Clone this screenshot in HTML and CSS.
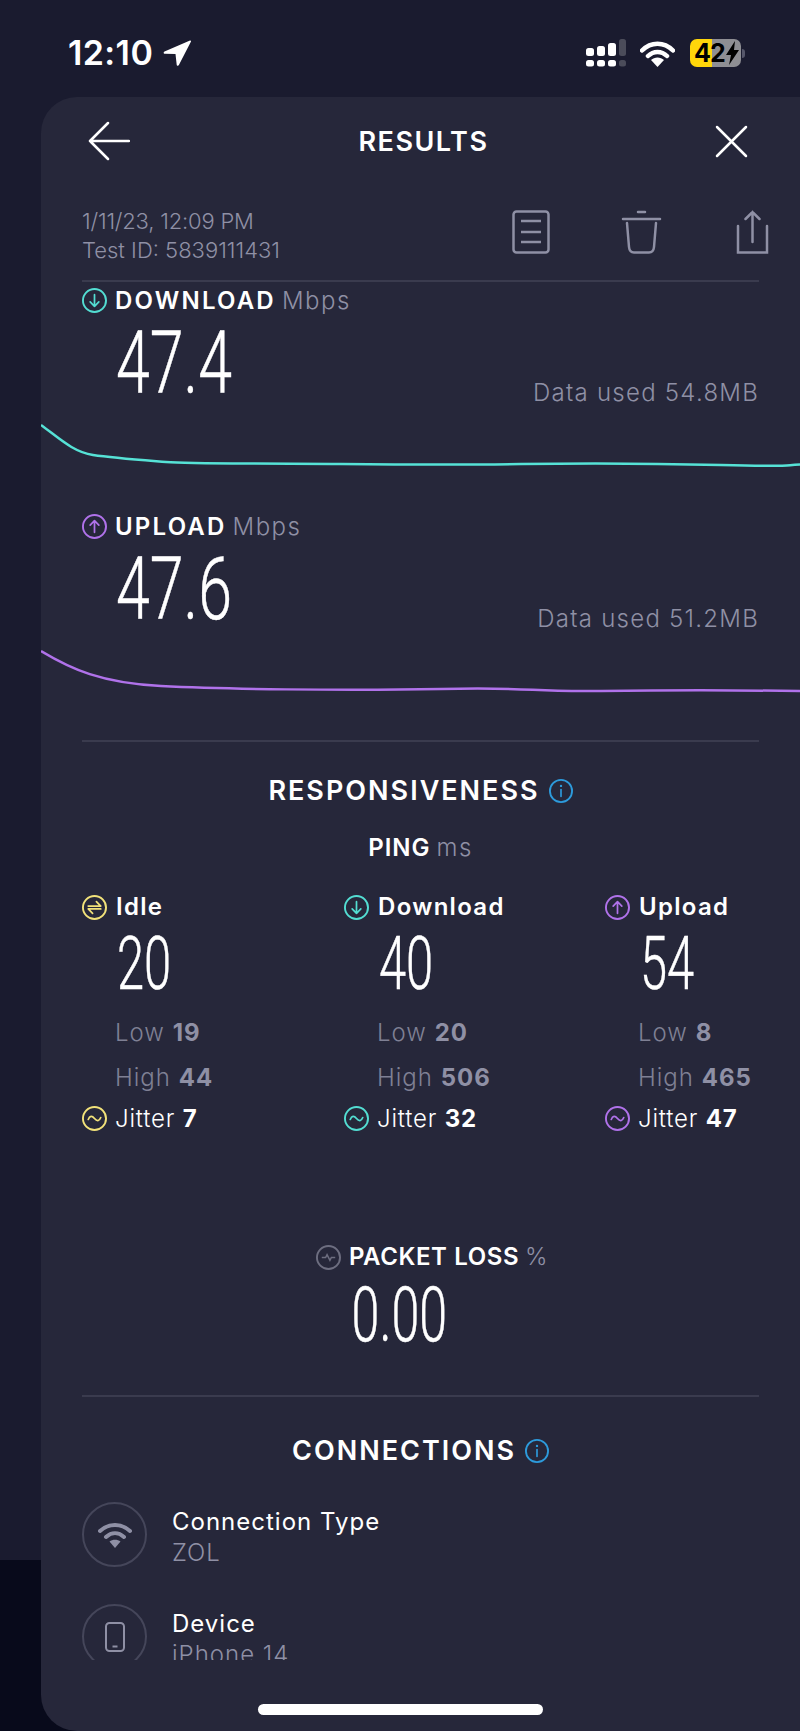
FILE: index.html
```html
<!DOCTYPE html>
<html lang="en">
<head>
    <meta charset="UTF-8">
    <meta name="viewport" content="width=device-width, initial-scale=1.0">
    <title>Results</title>
    <link rel="stylesheet" href="styles.css">
</head>
<body>
    <svg class="defs" width="0" height="0">
        <symbol id="i-down" viewBox="0 0 26 26">
            <circle cx="13" cy="13" r="12" fill="none" stroke="currentColor" stroke-width="2"/>
            <path d="M13 7v12M8.5 14.5L13 19l4.5-4.5" fill="none" stroke="currentColor" stroke-width="1.8" stroke-linecap="round" stroke-linejoin="round"/>
        </symbol>
        <symbol id="i-up" viewBox="0 0 26 26">
            <circle cx="13" cy="13" r="12" fill="none" stroke="currentColor" stroke-width="2"/>
            <path d="M13 19V7M8.5 11.5L13 7l4.5 4.5" fill="none" stroke="currentColor" stroke-width="1.8" stroke-linecap="round" stroke-linejoin="round"/>
        </symbol>
        <symbol id="i-idle" viewBox="0 0 26 26">
            <circle cx="13" cy="13" r="12" fill="none" stroke="currentColor" stroke-width="2"/>
            <path d="M6.5 11.5h13L15 7M19.500 14.500h-13L11 19" fill="none" stroke="currentColor" stroke-width="1.800" stroke-linecap="round" stroke-linejoin="round"/>
        </symbol>
        <symbol id="i-jitter" viewBox="0 0 26 26">
            <circle cx="13" cy="13" r="12" fill="none" stroke="currentColor" stroke-width="2"/>
            <path d="M6.5 14c1.5-4 4-4 6.500-1s5 3 6.500-1" fill="none" stroke="currentColor" stroke-width="1.8" stroke-linecap="round"/>
        </symbol>
        <symbol id="i-info" viewBox="0 0 26 26">
            <circle cx="13" cy="13" r="12" fill="none" stroke="currentColor" stroke-width="2"/>
            <path d="M13 11.500V19" fill="none" stroke="currentColor" stroke-width="1.800" stroke-linecap="round"/>
            <circle cx="13" cy="7.500" r="1.300" fill="currentColor"/>
        </symbol>
    </svg>

    <div class="status">
        <div class="status-time">
            <span>12:10</span>
            <svg width="28" height="26" viewBox="0 0 28 26"><path d="M27 .5L1.500 11.500c-1.300.6-1 2.200.3 2.200l10.700.4 1.200 10.600c.1 1.300 1.700 1.500 2.200.3L28 1.500c.2-.7-.4-1.300-1-1z" fill="#fff"/></svg>
        </div>
        <div class="status-icons">
            <svg width="41" height="28" viewBox="0 0 41 28">
                <rect x="0" y="9" width="8" height="8" rx="2.500" fill="#fff"/>
                <rect x="11" y="7" width="8" height="10" rx="2.500" fill="#fff"/>
                <rect x="22" y="4" width="8" height="13" rx="2.500" fill="#fff"/>
                <rect x="33" y="0" width="7" height="17" rx="2.500" fill="#4b4c5a"/>
                <rect x="0" y="21" width="8" height="6.500" rx="2.500" fill="#fff"/>
                <rect x="11" y="21" width="8" height="6.500" rx="2.500" fill="#fff"/>
                <rect x="22" y="21" width="8" height="6.500" rx="2.500" fill="#fff"/>
                <rect x="33" y="21" width="7" height="6.500" rx="2.500" fill="#4b4c5a"/>
            </svg>
            <svg class="status-wifi" width="35" height="27" viewBox="0 0 35 27">
                <path d="M2 10.500c9-9 22-9 31 0M8 16c5.500-5.500 13.500-5.500 19 0" fill="none" stroke="#fff" stroke-width="4.500" stroke-linecap="round"/>
                <path d="M17.500 27l-6.500-7c3.500-3.500 9.500-3.500 13 0z" fill="#fff"/>
            </svg>
            <div class="battery">
                <span class="battery-level">42</span>
                <svg width="14" height="24" viewBox="0 0 14 24"><path d="M9 0L0 14h5l-2 10 10-15H8z" fill="#000"/></svg>
            </div>
            <div class="battery-tip"></div>
        </div>
    </div>

    <div class="card">
        <div class="topbar">
            <svg width="42" height="40" viewBox="0 0 42 40"><path d="M41 20H2M20 2L2 20l18 18" fill="none" stroke="#fff" stroke-width="2.500" stroke-linecap="round" stroke-linejoin="round"/></svg>
            <h1 class="title">RESULTS</h1>
            <svg class="close" width="33" height="33" viewBox="0 0 33 33"><path d="M2 2l29 29M31 2L2 31" fill="none" stroke="#fff" stroke-width="2.500" stroke-linecap="round"/></svg>
        </div>

        <div class="meta">
            <div class="meta-text">
                <div class="meta-date">1/11/23, 12:09 PM</div>
                <div>Test ID: 5839111431</div>
            </div>
            <div class="meta-actions">
                <svg width="38" height="44" viewBox="0 0 38 44" fill="none" stroke="#8f90a5" stroke-width="2.500"><rect x="1.500" y="1.500" width="35" height="41" rx="3"/><path d="M9 11h20M9 22h20M9 32h20"/></svg>
                <svg width="41" height="44" viewBox="0 0 41 44" fill="none" stroke="#8f90a5" stroke-width="2.500" stroke-linecap="round"><path d="M2 9h37M17 2h7M6 13l2 24c.3 3 2 5.500 5 5.500h15c3 0 4.700-2.500 5-5.500l2-24"/></svg>
                <svg width="33" height="44" viewBox="0 0 33 44" fill="none" stroke="#8f90a5" stroke-width="2.500" stroke-linecap="round"><path d="M2 16v26.500h29V16M16.500 32V2M9.500 9l7-7 7 7"/></svg>
            </div>
        </div>

        <div class="speed">
            <div class="label">
                <svg class="icon-sm teal"><use href="#i-down"/></svg>
                <b>DOWNLOAD</b><span class="unit">Mbps</span>
            </div>
            <div class="speed-row">
                <span class="big-num big-speed">47.4</span>
                <span class="data-used">Data used 54.8MB</span>
            </div>
            <svg class="chart" width="759" height="60" viewBox="0 0 759 60">
                <path d="M0 15C18 28 32 42 52 45S100 50 125 52 200 53 300 54 420 55 480 54 600 53 680 55 740 55 759 54.500" fill="none" stroke="#56e2d6" stroke-width="2.500"/>
            </svg>
        </div>

        <div class="speed">
            <div class="label">
                <svg class="icon-sm purple"><use href="#i-up"/></svg>
                <b>UPLOAD</b><span class="unit">Mbps</span>
            </div>
            <div class="speed-row">
                <span class="big-num big-speed">47.6</span>
                <span class="data-used">Data used 51.2MB</span>
            </div>
            <svg class="chart" width="759" height="60" viewBox="0 0 759 60">
                <path d="M0 15C30 33 60 47 120 50S300 55 400 53 480 56 560 55 680 54 759 55" fill="none" stroke="#b072ea" stroke-width="2.500"/>
            </svg>
        </div>

        <div class="section responsiveness">
            <div class="section-title">
                <b>RESPONSIVENESS</b>
                <svg class="icon-info"><use href="#i-info"/></svg>
            </div>
            <div class="ping-title"><b>PING</b><span class="unit">ms</span></div>
            <div class="ping-grid">
                <div class="ping-col">
                    <div class="label label-case">
                        <svg class="icon-sm yellow"><use href="#i-idle"/></svg>
                        <b>Idle</b>
                    </div>
                    <div class="big-num big-ping">20</div>
                    <div class="stat">Low <b>19</b></div>
                    <div class="stat">High <b>44</b></div>
                    <div class="jitter">
                        <svg class="icon-sm yellow"><use href="#i-jitter"/></svg>
                        <span>Jitter <b>7</b></span>
                    </div>
                </div>
                <div class="ping-col">
                    <div class="label label-case">
                        <svg class="icon-sm teal"><use href="#i-down"/></svg>
                        <b>Download</b>
                    </div>
                    <div class="big-num big-ping">40</div>
                    <div class="stat">Low <b>20</b></div>
                    <div class="stat">High <b>506</b></div>
                    <div class="jitter">
                        <svg class="icon-sm teal"><use href="#i-jitter"/></svg>
                        <span>Jitter <b>32</b></span>
                    </div>
                </div>
                <div class="ping-col">
                    <div class="label label-case">
                        <svg class="icon-sm purple"><use href="#i-up"/></svg>
                        <b>Upload</b>
                    </div>
                    <div class="big-num big-ping">54</div>
                    <div class="stat">Low <b>8</b></div>
                    <div class="stat">High <b>465</b></div>
                    <div class="jitter">
                        <svg class="icon-sm purple"><use href="#i-jitter"/></svg>
                        <span>Jitter <b>47</b></span>
                    </div>
                </div>
            </div>
        </div>

        <div class="packet">
            <div class="label packet-label">
                <svg class="icon-sm" width="25" height="25" viewBox="0 0 26 26"><circle cx="13" cy="13" r="12" fill="none" stroke="#6d6e80" stroke-width="2"/><path d="M6 13h4l1.500-3 3 6 1.500-3h4" fill="none" stroke="#6d6e80" stroke-width="1.500"/></svg>
                <b>PACKET LOSS</b><span class="unit">%</span>
            </div>
            <div class="big-packet-wrap"><span class="big-num big-packet">0.00</span></div>
        </div>

        <div class="section connections">
            <div class="section-title">
                <b>CONNECTIONS</b>
                <svg class="icon-info"><use href="#i-info"/></svg>
            </div>
            <div class="conn-list">
                <div class="conn-row">
                    <div class="conn-icon">
                        <svg width="34" height="26" viewBox="0 0 34 26">
                            <path d="M2 9c9-8 21-8 30 0M8 15c5.500-5 12.500-5 18 0" fill="none" stroke="#8f90a5" stroke-width="4" stroke-linecap="round"/>
                            <path d="M17 26l-5.500-6.500c3-2.500 8-2.500 11 0z" fill="#8f90a5"/>
                        </svg>
                    </div>
                    <div class="conn-text">
                        <div>Connection Type</div>
                        <div class="conn-sub">ZOL</div>
                    </div>
                </div>
                <div class="conn-row">
                    <div class="conn-icon">
                        <svg width="20" height="30" viewBox="0 0 20 30" fill="none" stroke="#8f90a5" stroke-width="2"><rect x="1" y="1" width="18" height="28" rx="3.500"/><path d="M7.500 24.500h5"/></svg>
                    </div>
                    <div class="conn-text">
                        <div>Device</div>
                        <div class="conn-sub">iPhone 14</div>
                    </div>
                </div>
            </div>
        </div>
    </div>

    <div class="home-bar"></div>
</body>
</html>
```

FILE: styles.css
```css
* {
    box-sizing: border-box;
}
html, body {
    margin: 0;
    padding: 0;
}
body {
    position: relative;
    width: 800px;
    height: 1731px;
    overflow: hidden;
    font-family: Inter, "Noto Sans", sans-serif;
    color: #fff;
    background: linear-gradient(#1a1b2f 0, #1a1b2f 1560px, #080a1b 1560px);
}
.defs {
    position: absolute;
}

/* status bar */
.status {
    height: 97px;
    padding: 39px 55px 0 68px;
    display: flex;
    justify-content: space-between;
    align-items: flex-start;
}
.status-time {
    display: flex;
    align-items: center;
    gap: 10px;
    font-size: 34px;
    font-weight: 600;
    line-height: 28px;
    letter-spacing: .4px;
}
.status-icons {
    display: flex;
    align-items: flex-start;
}
.status-wifi {
    margin: 1px 15px 0 13px;
}
.battery {
    width: 51px;
    height: 28px;
    border-radius: 7px;
    display: flex;
    align-items: center;
    justify-content: flex-start;
    padding-left: 4px;
    gap: 1px;
    background: linear-gradient(90deg, #ffd60a 0, #ffd60a 22px, #8e8e93 22px);
    color: #000;
}
.battery-level {
    font-size: 25px;
    font-weight: 700;
    line-height: 28px;
    letter-spacing: -1px;
}
.battery-tip {
    width: 3px;
    height: 9px;
    margin: 10px 0 0 1px;
    border-radius: 0 3px 3px 0;
    background: #56576a;
}

/* card */
.card {
    margin-left: 41px;
    height: 1634px;
    padding: 0 41px;
    background: #26273a;
    border-radius: 36px 0 0 36px;
    overflow: hidden;
}
.topbar {
    height: 88px;
    margin: 0 11px 0 6px;
    display: flex;
    justify-content: space-between;
    align-items: center;
}
.title {
    margin: 0 0 0 2px;
    font-size: 27px;
    font-weight: 600;
    letter-spacing: 1.5px;
}
.meta {
    height: 97px;
    padding-top: 22px;
    display: flex;
    justify-content: space-between;
    border-bottom: 2px solid #3a3b4e;
    font-size: 22px;
    font-weight: 300;
    line-height: 29px;
    color: #8f90a5;
}
.meta-date {
    letter-spacing: -.2px;
}
.meta-actions {
    display: flex;
    align-items: flex-start;
    gap: 71px;
    margin: 3px -10px 0 0;
}
.meta-actions svg:last-child {
    margin-left: 3px;
}

/* speed blocks */
.label {
    height: 34px;
    display: flex;
    align-items: center;
    font-size: 24px;
    line-height: 34px;
}
.label b {
    font-weight: 600;
    margin-left: 8px;
}
.unit {
    margin-left: 6px;
    font-weight: 300;
    letter-spacing: 1.5px;
    color: #8f90a5;
}
.icon-sm {
    width: 25px;
    height: 25px;
    flex: none;
}
.teal {
    color: #53ddd2;
}
.purple {
    color: #b072ea;
}
.yellow {
    color: #f2e27a;
}
.speed {
    height: 226px;
}
.speed .label {
    padding-top: 3px;
}
.speed .label b {
    letter-spacing: 2.2px;
}
.speed-row {
    height: 94px;
    display: flex;
    justify-content: space-between;
    padding-left: 34px;
}
.data-used {
    align-self: flex-end;
    margin-bottom: 3px;
    font-size: 24px;
    font-weight: 300;
    line-height: 29px;
    letter-spacing: 1.25px;
    color: #8f90a5;
}
.big-num {
    display: inline-block;
    font-family: Roboto, sans-serif;
    font-weight: 300;
    -webkit-text-stroke: .5px #fff;
    transform-origin: left center;
}
.big-speed {
    font-size: 87px;
    line-height: 94px;
    transform: scaleX(.7);
}
.chart {
    display: block;
    margin-left: -41px;
}

/* sections */
.section-title {
    display: flex;
    justify-content: center;
    align-items: center;
    gap: 9px;
    font-size: 27px;
    line-height: 34px;
    letter-spacing: 2px;
}
.section-title b {
    font-weight: 600;
}
.icon-info {
    width: 24px;
    height: 24px;
    color: #2d9bdc;
}
.responsiveness {
    margin-top: 6px;
    border-top: 2px solid #3a3b4e;
    padding-top: 32px;
}
.ping-title {
    margin-top: 23px;
    text-align: center;
    font-size: 24px;
    line-height: 34px;
}
.ping-title b {
    font-weight: 600;
    letter-spacing: 1px;
}
.ping-grid {
    margin-top: 25px;
    display: grid;
    grid-template-columns: 262px 261px auto;
}
.label-case b {
    margin-left: 9px;
    letter-spacing: 1.3px;
}
.big-ping {
    display: block;
    height: 86px;
    margin-left: 35px;
    padding-top: 5px;
    font-size: 74px;
    line-height: 70px;
    transform: scaleX(.66);
}
.stat {
    height: 45px;
    padding-left: 33px;
    font-size: 24px;
    font-weight: 300;
    line-height: 45px;
    letter-spacing: 1px;
    color: #7f8094;
}
.stat b {
    font-weight: 700;
    color: #8f90a5;
}
.jitter {
    height: 34px;
    display: flex;
    align-items: center;
    gap: 8px;
    margin-top: 1px;
    font-size: 24px;
    font-weight: 300;
    letter-spacing: .8px;
}
.jitter b {
    font-weight: 700;
}
.packet {
    margin-top: 105px;
    height: 155px;
    text-align: center;
}
.packet-label {
    justify-content: center;
    margin-left: 24px;
}
.packet-label b {
    letter-spacing: .6px;
}
.big-packet-wrap {
    margin-top: 10px;
    height: 62px;
}
.big-packet {
    font-size: 76px;
    line-height: 62px;
    height: 62px;
    margin-right: 42px;
    transform: scaleX(.66);
    transform-origin: center center;
}
.connections {
    border-top: 2px solid #3a3b4e;
    padding-top: 37px;
}
.conn-list {
    margin-top: 34px;
    height: 158px;
    overflow: hidden;
}
.conn-row {
    height: 102px;
    display: flex;
    gap: 25px;
}
.conn-icon {
    width: 65px;
    height: 65px;
    border: 2px solid #45465a;
    border-radius: 50%;
    display: flex;
    justify-content: center;
    align-items: center;
    flex: none;
}
.conn-text {
    padding-top: 4px;
    font-size: 24px;
    font-weight: 400;
    line-height: 31px;
    letter-spacing: 1px;
}
.conn-sub {
    font-weight: 300;
    color: #8f90a5;
}
.home-bar {
    position: absolute;
    left: 258px;
    top: 1704px;
    width: 285px;
    height: 11px;
    border-radius: 6px;
    background: #fff;
}
```
